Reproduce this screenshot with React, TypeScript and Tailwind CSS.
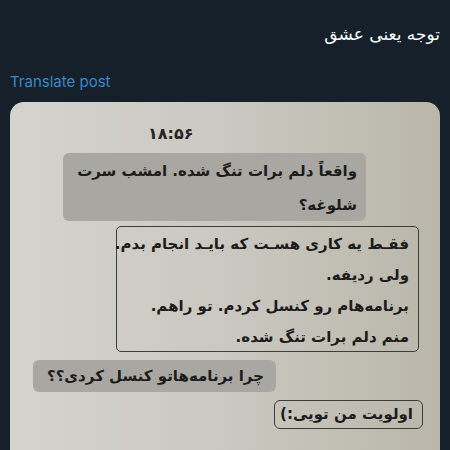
export default function App() {
  return (
    <div className="h-[450px] w-[450px] overflow-hidden bg-[#15202b] font-['DejaVu_Sans',sans-serif]">
      <div dir="rtl" className="pt-[20px] pr-[10px] text-[17px] leading-[28px] text-white">
        توجه یعنی عشق
      </div>
      <div className="mt-[24px] pl-[10px] font-['Inter',sans-serif] text-[15px] leading-[20px] text-[#3a88c9]">
        Translate post
      </div>

      <div className="mx-[10px] mt-[10px] flex h-[380px] flex-col items-start rounded-[14px] bg-gradient-to-r from-[#d4d3ce] via-[#cac8c0] to-[#bab6aa] pt-[22px] font-bold text-[#1c1c1c] whitespace-nowrap">
        <div className="ml-[138px] w-[44px] text-center text-[16px] leading-[20px] text-[#262626]">
          ۱۸:۵۶
        </div>

        <div
          dir="rtl"
          className="ml-[53px] mt-[9px] h-[68px] w-[303px] rounded-[6px] bg-[#a9a7a1] pr-[9px] pt-[1px] text-[15px] leading-[34px]"
        >
          <div>واقعاً دلم برات تنگ شده. امشب سرت</div>
          <div>شلوغه؟</div>
        </div>

        <div
          dir="rtl"
          className="ml-[106px] mt-[5px] h-[126px] w-[303px] rounded-[5px] border border-[#3d3d3d] pr-[9px] pt-[2px] text-[15px] leading-[31px]"
        >
          <div>فقـط یه کاری هسـت که بایـد انجام بدم.</div>
          <div>ولی ردیفه.</div>
          <div>برنامه‌هام رو کنسل کردم. تو راهم.</div>
          <div>منم دلم برات تنگ شده.</div>
        </div>

        <div
          dir="rtl"
          className="ml-[23px] mt-[8px] h-[32px] w-[243px] rounded-[6px] bg-[#a9a7a1] pr-[12px] text-[15px] leading-[32px]"
        >
          چرا برنامه‌هاتو کنسل کردی؟؟
        </div>

        <div
          dir="rtl"
          className="ml-[264px] mt-[8px] h-[29px] w-[149px] rounded-[6px] border border-[#3d3d3d] pr-[9px] text-[15px] leading-[27px]"
        >
          اولویت من تویی:)
        </div>
      </div>
    </div>
  );
}
